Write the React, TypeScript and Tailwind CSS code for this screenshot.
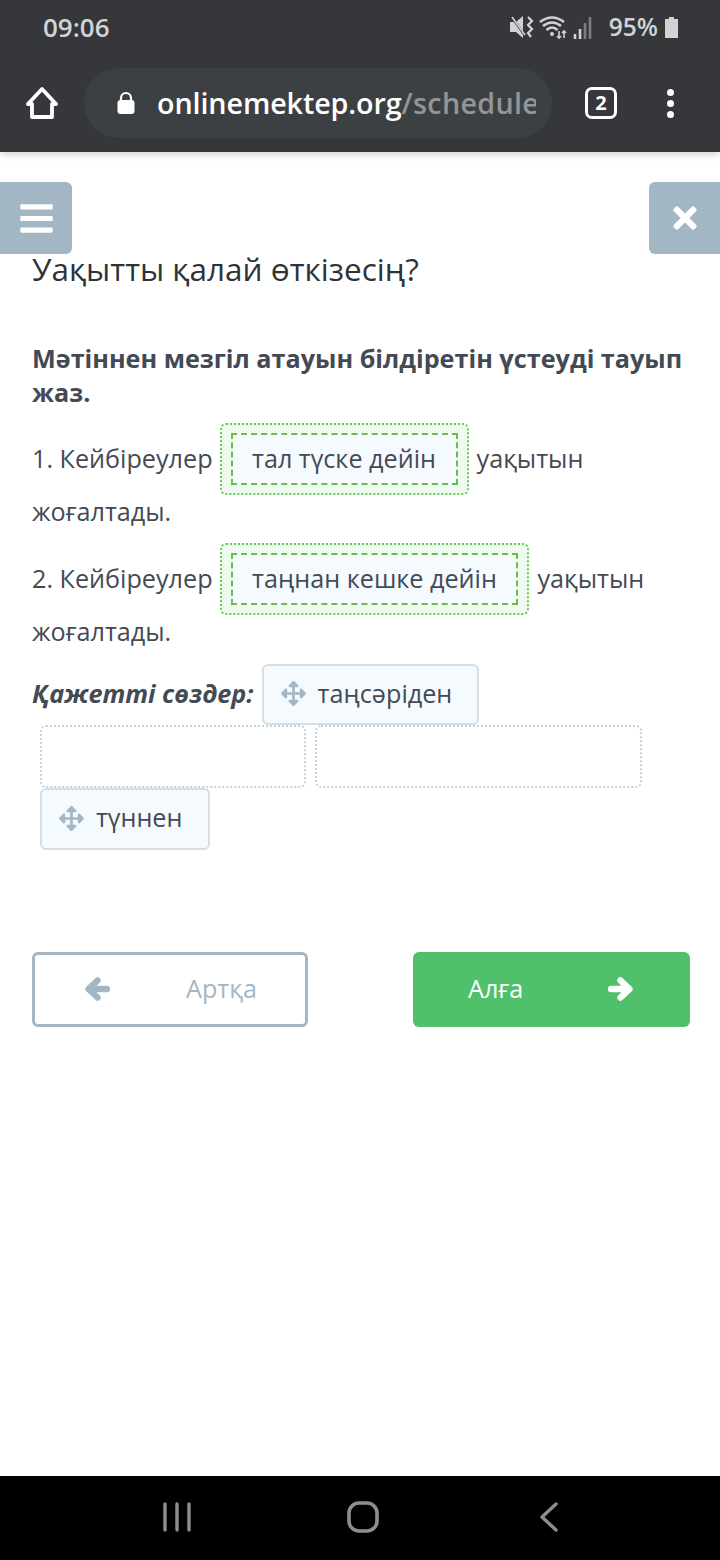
import React from "react";
import { FaArrowsAlt, FaBars, FaTimes } from "react-icons/fa";

function Home() {
  return (
    <svg width="34" height="34" viewBox="0 0 34 34" fill="none" stroke="#fff" strokeWidth="3.8" strokeLinejoin="round">
      <path d="M17 3 L31 18 H27 V31 H7 V18 H3 Z" />
    </svg>
  );
}

function StatusIcons() {
  return (
    <svg width="84" height="26" viewBox="0 0 84 26" fill="none">
      <path d="M1 8 H7 L14 2 V24 L7 18 H1 Z" fill="#d2d3d4" />
      <path d="M2 2 L17 23" stroke="#36373b" strokeWidth="2.4" />
      <path d="M3 3 L16 21" stroke="#d2d3d4" strokeWidth="1.6" />
      <path d="M19 3 L23 7 L19 11 L23 15 L19 19 L22 23" stroke="#d2d3d4" strokeWidth="2.2" />
      <path d="M31 8 Q43 -1 55 8" stroke="#d2d3d4" strokeWidth="2.6" />
      <path d="M34 12 Q43 5 52 12" stroke="#d2d3d4" strokeWidth="2.6" />
      <path d="M37.5 16 Q43 11 48.5 16" stroke="#d2d3d4" strokeWidth="2.6" />
      <circle cx="43" cy="20" r="2" fill="#d2d3d4" />
      <path d="M50 17 V24 M48 22 L50 24 L52 22 M55 24 V17 M53 19 L55 17 L57 19" stroke="#d2d3d4" strokeWidth="1.6" />
      <path d="M66 20 V25" stroke="#d2d3d4" strokeWidth="2.6" />
      <path d="M71 15 V25" stroke="#d2d3d4" strokeWidth="2.6" />
      <path d="M76 9 V25" stroke="#7d7e82" strokeWidth="2.6" />
      <path d="M81 3 V25" stroke="#7d7e82" strokeWidth="2.6" />
    </svg>
  );
}

function Arrow({ flip, className }: { flip?: boolean; className?: string }) {
  return (
    <svg
      className={className}
      width="25"
      height="24"
      viewBox="0 0 25 24"
      fill="none"
      stroke="currentColor"
      strokeWidth="6.4"
      strokeLinecap="round"
      strokeLinejoin="round"
    >
      {flip ? <path d="M3 12 H21 M12.5 3.5 L21.5 12 L12.5 20.5" /> : <path d="M22 12 H4 M12.5 3.5 L3.5 12 L12.5 20.5" />}
    </svg>
  );
}

function Answer({ text }: { text: string }) {
  return (
    <div className="rounded-md border-2 border-dotted border-[#6cc85c] bg-[#f0fbf0] px-[9px] py-[8px]">
      <div className="flex h-[52px] items-center border-2 border-dashed border-[#6dbb4f] bg-[#f5fafe] px-[19.5px] text-[#434a54]">
        {text}
      </div>
    </div>
  );
}

function Word({ text, className }: { text: string; className: string }) {
  return (
    <div className={`flex items-center rounded-md border-2 border-[#d3dfe5] bg-[#f5fafe] pb-[2px] pl-[17px] text-[#434a54] ${className}`}>
      <FaArrowsAlt className="mr-[12px] text-[#a3b7c4]" size={25} />
      {text}
    </div>
  );
}

export default function App() {
  return (
    <div className="flex h-[1560px] w-[720px] flex-col overflow-hidden bg-white font-['Open_Sans',sans-serif] text-[25.2px] text-[#434a54]">
      <header className="h-[152px] shrink-0 bg-[#36373b] font-semibold shadow-[0_2px_8px_rgba(0,0,0,0.2)]">
        <div className="flex h-[56px] items-center justify-between pb-[2px] pl-[43px] pr-[41px] text-[26px] text-[#d2d3d4]">
          <span>09:06</span>
          <div className="flex items-center">
            <StatusIcons />
            <span className="ml-[16px] mr-[6px] text-[24.5px]">95%</span>
            <svg width="15" height="21" viewBox="0 0 15 21" fill="#d2d3d4">
              <path d="M5 0 H10 V2 H14 V21 H1 V2 H5 Z" />
            </svg>
          </div>
        </div>
        <div className="flex items-center pl-[25px] pt-[12px]">
          <Home />
          <div className="ml-[25px] flex h-[70px] w-[468px] items-center rounded-full bg-[#3d4043] pl-[32px] pr-[16px]">
            <svg className="shrink-0" width="20" height="24" viewBox="0 0 20 24" fill="#fff">
              <path d="M5 10 V7 a5 5 0 0 1 10 0 V10" fill="none" stroke="#fff" strokeWidth="2.2" />
              <rect x="1.5" y="9" width="17" height="14" rx="3" />
            </svg>
            <span className="ml-[21px] overflow-hidden whitespace-nowrap text-[28.7px] tracking-[-0.1px] text-white">
              onlinemektep.org<span className="tracking-[0.3px] text-[#939598]">/schedule</span>
            </span>
          </div>
          <div className="ml-[33px] flex h-[32px] w-[32px] items-center justify-center rounded-[7px] border-[3px] border-white text-[20px] font-bold text-white">
            2
          </div>
          <div className="ml-[50px] flex flex-col gap-[4px]">
            <span className="h-[7px] w-[7px] rounded-full bg-white" />
            <span className="h-[7px] w-[7px] rounded-full bg-white" />
            <span className="h-[7px] w-[7px] rounded-full bg-white" />
          </div>
        </div>
      </header>

      <main className="flex-1 pt-[30px]">
        <div className="flex h-[72px] justify-between">
          <button className="flex w-[72px] items-center justify-center rounded-r-md bg-[#a2b6c3] text-white">
            <FaBars size={37} />
          </button>
          <button className="flex w-[71px] items-center justify-center rounded-l-md bg-[#a2b6c3] text-white">
            <FaTimes size={34} />
          </button>
        </div>

        <div className="pl-[32px] pr-[30px]">
          <h1 className="-mt-[5px] text-[31.5px] font-normal leading-[40px] text-[#2f3338]">Уақытты қалай өткізесің?</h1>

          <p className="mt-[52px] text-[25.2px] font-bold leading-[34px] text-[#434a54]">
            Мәтіннен мезгіл атауын білдіретін үстеуді тауып жаз.
          </p>

          <div className="mt-[14px] flex h-[72px] items-center">
            <span>1. Кейбіреулер</span>
            <div className="ml-[7px] mr-[8px]"><Answer text="тал түске дейін" /></div>
            <span>уақытын</span>
          </div>
          <p className="pb-[4px] leading-[32px]">жоғалтады.</p>

          <div className="mt-[12px] flex h-[72px] items-center">
            <span>2. Кейбіреулер</span>
            <div className="ml-[7px] mr-[8px]"><Answer text="таңнан кешке дейін" /></div>
            <span>уақытын</span>
          </div>
          <p className="pb-[4px] leading-[32px]">жоғалтады.</p>

          <div className="mt-[13px] flex h-[61px] items-center">
            <em className="pb-[2px] font-bold">Қажетті сөздер:</em>
            <Word text="таңсәріден" className="ml-[8px] h-[61px] w-[217px]" />
          </div>

          <div className="ml-[8px] flex h-[63px] gap-[9px]">
            <div className="w-[266px] rounded-md border-2 border-dotted border-[#c3d3dc]" />
            <div className="w-[327px] rounded-md border-2 border-dotted border-[#c3d3dc]" />
          </div>

          <div className="ml-[8px] flex">
            <Word text="түннен" className="h-[62px] w-[170px]" />
          </div>

          <div className="mt-[102px] flex justify-between">
            <button className="flex h-[75px] w-[276px] items-center rounded-md border-[3px] border-[#a2b6c3] bg-white pb-[2px] pl-[50px] text-[#a2b6c3]">
              <Arrow />
              <span className="ml-[76px]">Артқа</span>
            </button>
            <button className="flex h-[75px] w-[277px] items-center rounded-md bg-[#50c16a] pb-[2px] pl-[55px] text-white">
              <span>Алға</span>
              <Arrow flip className="ml-[85px]" />
            </button>
          </div>
        </div>
      </main>

      <nav className="flex h-[84px] shrink-0 items-center bg-black pb-[2px] pl-[162px]">
        <svg width="30" height="30" viewBox="0 0 30 30" stroke="#8e8e8e" strokeWidth="3.4" strokeLinecap="round">
          <path d="M3 2 V28 M15 2 V28 M27 2 V28" />
        </svg>
        <svg className="ml-[155px]" width="32" height="32" viewBox="0 0 32 32" fill="none" stroke="#8e8e8e" strokeWidth="3.6">
          <rect x="2" y="2" width="28" height="28" rx="10" />
        </svg>
        <svg className="ml-[160px]" width="20" height="30" viewBox="0 0 20 30" fill="none" stroke="#8e8e8e" strokeWidth="3.4" strokeLinecap="round" strokeLinejoin="round">
          <path d="M17 2 L3 15 L17 28" />
        </svg>
      </nav>
    </div>
  );
}
